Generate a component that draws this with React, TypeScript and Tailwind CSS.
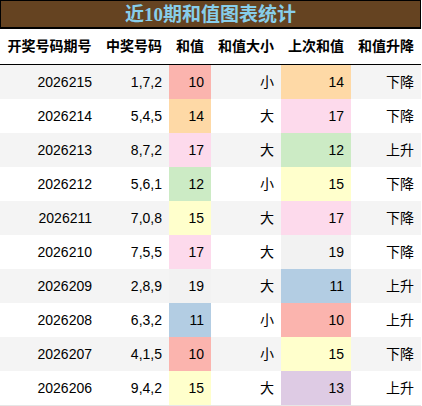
import React from 'react';

const rows = [
  { issue: '2026215', nums: '1,7,2', sum: 10, size: '小', prev: 14, trend: '下降' },
  { issue: '2026214', nums: '5,4,5', sum: 14, size: '大', prev: 17, trend: '下降' },
  { issue: '2026213', nums: '8,7,2', sum: 17, size: '大', prev: 12, trend: '上升' },
  { issue: '2026212', nums: '5,6,1', sum: 12, size: '小', prev: 15, trend: '下降' },
  { issue: '2026211', nums: '7,0,8', sum: 15, size: '大', prev: 17, trend: '下降' },
  { issue: '2026210', nums: '7,5,5', sum: 17, size: '大', prev: 19, trend: '下降' },
  { issue: '2026209', nums: '2,8,9', sum: 19, size: '大', prev: 11, trend: '上升' },
  { issue: '2026208', nums: '6,3,2', sum: 11, size: '小', prev: 10, trend: '上升' },
  { issue: '2026207', nums: '4,1,5', sum: 10, size: '小', prev: 15, trend: '下降' },
  { issue: '2026206', nums: '9,4,2', sum: 15, size: '大', prev: 13, trend: '上升' },
];

// pastel palette keyed by sum value
const sumColor: Record<number, string> = {
  10: 'bg-[#fbb4ae]',
  11: 'bg-[#b3cde3]',
  12: 'bg-[#ccebc5]',
  13: 'bg-[#decbe4]',
  14: 'bg-[#fed9a6]',
  15: 'bg-[#ffffcc]',
  17: 'bg-[#fddaec]',
  19: 'bg-[#f2f2f2]',
};

const headers = ['开奖号码期号', '中奖号码', '和值', '和值大小', '上次和值', '和值升降'];

const grid = 'grid grid-cols-[99px_70px_42px_70px_70px_70px]';

export default function App() {
  return (
    <div className="w-[422px] h-[406px] bg-white text-black font-['Liberation_Sans','Noto_Sans_CJK_SC',sans-serif] text-[14px]">
      {/* Title bar */}
      <div className="w-[421px] h-[29px] bg-[#654321] border border-b-2 border-black flex items-center justify-center">
        <span className="font-['Liberation_Serif','Noto_Sans_CJK_SC',serif] font-bold text-[19px] leading-none text-[#87ceeb]">
          近10期和值图表统计
        </span>
      </div>

      {/* Header */}
      <div className={`${grid} w-[421px] h-[36px] border-b border-black font-bold`}>
        {headers.map((h) => (
          <div key={h} className="flex items-center justify-center">
            {h}
          </div>
        ))}
      </div>

      {/* Rows */}
      <div className="w-[421px] border-b border-[#e6e6e6]">
        {rows.map((r, i) => (
          <div
            key={r.issue}
            className={`${grid} h-[34px] ${i % 2 === 0 ? 'bg-[#f4f4f4]' : 'bg-white'}`}
          >
            <div className="flex items-center justify-end pr-[7px]">{r.issue}</div>
            <div className="flex items-center justify-end pr-[7px]">{r.nums}</div>
            <div className={`flex items-center justify-end pr-[7px] ${sumColor[r.sum] ?? ''}`}>{r.sum}</div>
            <div className="flex items-center justify-end pr-[7px]">{r.size}</div>
            <div className={`flex items-center justify-end pr-[7px] ${sumColor[r.prev] ?? ''}`}>{r.prev}</div>
            <div className="flex items-center justify-end pr-[7px]">{r.trend}</div>
          </div>
        ))}
      </div>
    </div>
  );
}
